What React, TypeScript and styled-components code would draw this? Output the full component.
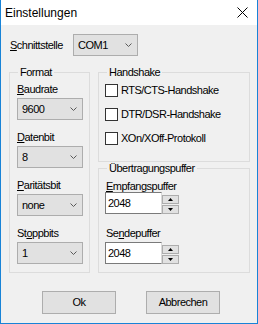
import { FC } from "react";
import styled, { createGlobalStyle } from "styled-components";

const GlobalStyle = createGlobalStyle`
  html, body {
    margin: 0;
    padding: 0;
    background: #f0f0f0;
  }
  body {
    font-family: "Liberation Sans", Arial, sans-serif;
    font-size: 11px;
    letter-spacing: -0.5px;
    color: #000;
  }
`;

const Chevron: FC = () => (
  <svg width="7" height="4" viewBox="0 0 7 4">
    <polyline points="0.5,0.5 3.5,3.5 6.5,0.5" fill="none" stroke="#5a5a5a" strokeWidth="1" />
  </svg>
);

const Arrow: FC<{ down?: boolean }> = ({ down }) => (
  <svg width="5" height="3" viewBox="0 0 5 3">
    {down ? <polygon points="0,0 5,0 2.5,3" fill="#000" /> : <polygon points="0,3 5,3 2.5,0" fill="#000" />}
  </svg>
);

const App: FC = () => {
  return (
    <>
      <GlobalStyle />
      <Window>
        <TitleBar>
          <span>Einstellungen</span>
          <CloseButton>
            <svg width="11" height="11" viewBox="0 0 11 11">
              <line x1="0.5" y1="0.5" x2="10.5" y2="10.5" stroke="#000" strokeWidth="1" />
              <line x1="10.5" y1="0.5" x2="0.5" y2="10.5" stroke="#000" strokeWidth="1" />
            </svg>
          </CloseButton>
        </TitleBar>

        <TopRow>
          <InlineLabel><u>S</u>chnittstelle</InlineLabel>
          <Select $width={65}>
            <span>COM1</span>
            <Chevron />
          </Select>
        </TopRow>

        <GroupsRow>
          <Group $width={81} $height={201}>
            <Legend>Format</Legend>
            <FormatBody>
              <FieldLabel><u>B</u>audrate</FieldLabel>
              <Select $width={66}><span>9600</span><Chevron /></Select>
              <FieldLabel $gap><u>D</u>atenbit</FieldLabel>
              <Select $width={66}><span>8</span><Chevron /></Select>
              <FieldLabel $gap><u>P</u>aritätsbit</FieldLabel>
              <Select $width={66}><span>none</span><Chevron /></Select>
              <FieldLabel $gap>St<u>o</u>ppbits</FieldLabel>
              <Select $width={66}><span>1</span><Chevron /></Select>
            </FormatBody>
          </Group>

          <RightColumn>
            <Group $width={152} $height={90}>
              <Legend>Handshake</Legend>
              <CheckList>
                <CheckRow><CheckBox />RTS/CTS-Handshake</CheckRow>
                <CheckRow><CheckBox />DTR/DSR-Handshake</CheckRow>
                <CheckRow><CheckBox />XOn/XOff-Protokoll</CheckRow>
              </CheckList>
            </Group>

            <Group $width={152} $height={105}>
              <Legend>Übertragungspuffer</Legend>
              <BufferBody>
                <BufferLabel><u>E</u>mpfangspuffer</BufferLabel>
                <SpinRow $top={-1}>
                  <NumberBox>2048</NumberBox>
                  <SpinButtons>
                    <SpinButton><Arrow /></SpinButton>
                    <SpinButton><Arrow down /></SpinButton>
                  </SpinButtons>
                </SpinRow>
                <BufferLabel $gap>Se<u>n</u>depuffer</BufferLabel>
                <SpinRow $top={2}>
                  <NumberBox>2048</NumberBox>
                  <SpinButtons>
                    <SpinButton><Arrow /></SpinButton>
                    <SpinButton><Arrow down /></SpinButton>
                  </SpinButtons>
                </SpinRow>
              </BufferBody>
            </Group>
          </RightColumn>
        </GroupsRow>

        <ButtonRow>
          <DialogButton>Ok</DialogButton>
          <DialogButton>Abbrechen</DialogButton>
        </ButtonRow>
      </Window>
    </>
  );
};

export default App;

const Window = styled.div`
  width: 258px;
  height: 324px;
  box-sizing: border-box;
  border: 1px solid #1883d7;
  border-top: none;
  background: #f0f0f0;
  display: flex;
  flex-direction: column;
`;

const TitleBar = styled.div`
  height: 25px;
  flex-shrink: 0;
  background: #fff;
  display: flex;
  align-items: center;
  justify-content: space-between;
  padding-left: 4px;
  font-size: 12px;
  letter-spacing: 0;
`;

const CloseButton = styled.div`
  display: flex;
  margin-right: 9px;
`;

const TopRow = styled.div`
  display: flex;
  align-items: center;
  margin-top: 9px;
  padding-left: 9px;
`;

const InlineLabel = styled.span`
  width: 63px;
  line-height: 13px;
`;

const Select = styled.div<{ $width: number }>`
  width: ${(p) => p.$width}px;
  height: 22px;
  box-sizing: border-box;
  border: 1px solid #adadad;
  background: #e1e1e1;
  display: flex;
  align-items: center;
  justify-content: space-between;
  padding: 0 5px 0 4px;
  line-height: 13px;
`;

const GroupsRow = styled.div`
  display: flex;
  gap: 8px;
  margin-top: 16px;
  padding-left: 8px;
`;

const RightColumn = styled.div`
  display: flex;
  flex-direction: column;
  gap: 6px;
`;

const Group = styled.div<{ $width: number; $height: number }>`
  position: relative;
  width: ${(p) => p.$width}px;
  height: ${(p) => p.$height}px;
  box-sizing: border-box;
  border: 1px solid #dcdcdc;
`;

const Legend = styled.span`
  position: absolute;
  top: -7px;
  left: 8px;
  padding: 0 2px;
  background: #f0f0f0;
  line-height: 13px;
`;

const FormatBody = styled.div`
  display: flex;
  flex-direction: column;
  padding: 10px 0 0 7px;
`;

const FieldLabel = styled.span<{ $gap?: boolean }>`
  line-height: 13px;
  margin-top: ${(p) => (p.$gap ? 11 : 0)}px;
  margin-bottom: 2px;
`;

const CheckList = styled.div`
  display: flex;
  flex-direction: column;
  gap: 11px;
  padding: 11px 0 0 6px;
`;

const CheckRow = styled.div`
  display: flex;
  align-items: center;
  gap: 3px;
  height: 13px;
  line-height: 13px;
`;

const CheckBox = styled.span`
  width: 13px;
  height: 13px;
  box-sizing: border-box;
  border: 1px solid #333;
  background: #fff;
`;

const BufferBody = styled.div`
  display: flex;
  flex-direction: column;
  padding: 11px 0 0 6px;
`;

const BufferLabel = styled.span<{ $gap?: boolean }>`
  line-height: 13px;
  padding-left: 1px;
  margin-top: ${(p) => (p.$gap ? 13 : 0)}px;
`;

const SpinRow = styled.div<{ $top: number }>`
  display: flex;
  align-items: flex-end;
  margin-top: ${(p) => p.$top}px;
`;

const NumberBox = styled.div`
  width: 57px;
  height: 22px;
  box-sizing: border-box;
  border: 1px solid #7a7a7a;
  border-right-color: #d9d9d9;
  background: #fff;
  display: flex;
  align-items: center;
  padding-left: 2px;
  line-height: 13px;
`;

const SpinButtons = styled.div`
  display: flex;
  flex-direction: column;
  gap: 1px;
`;

const SpinButton = styled.div`
  width: 17px;
  height: 9px;
  box-sizing: border-box;
  border: 1px solid #adadad;
  background: #e1e1e1;
  display: flex;
  align-items: center;
  justify-content: center;
`;

const ButtonRow = styled.div`
  display: flex;
  gap: 30px;
  margin-top: 18px;
  padding-left: 41px;
`;

const DialogButton = styled.div`
  width: 74px;
  height: 23px;
  box-sizing: border-box;
  border: 1px solid #adadad;
  background: #e1e1e1;
  display: flex;
  align-items: center;
  justify-content: center;
  line-height: 13px;
`;
